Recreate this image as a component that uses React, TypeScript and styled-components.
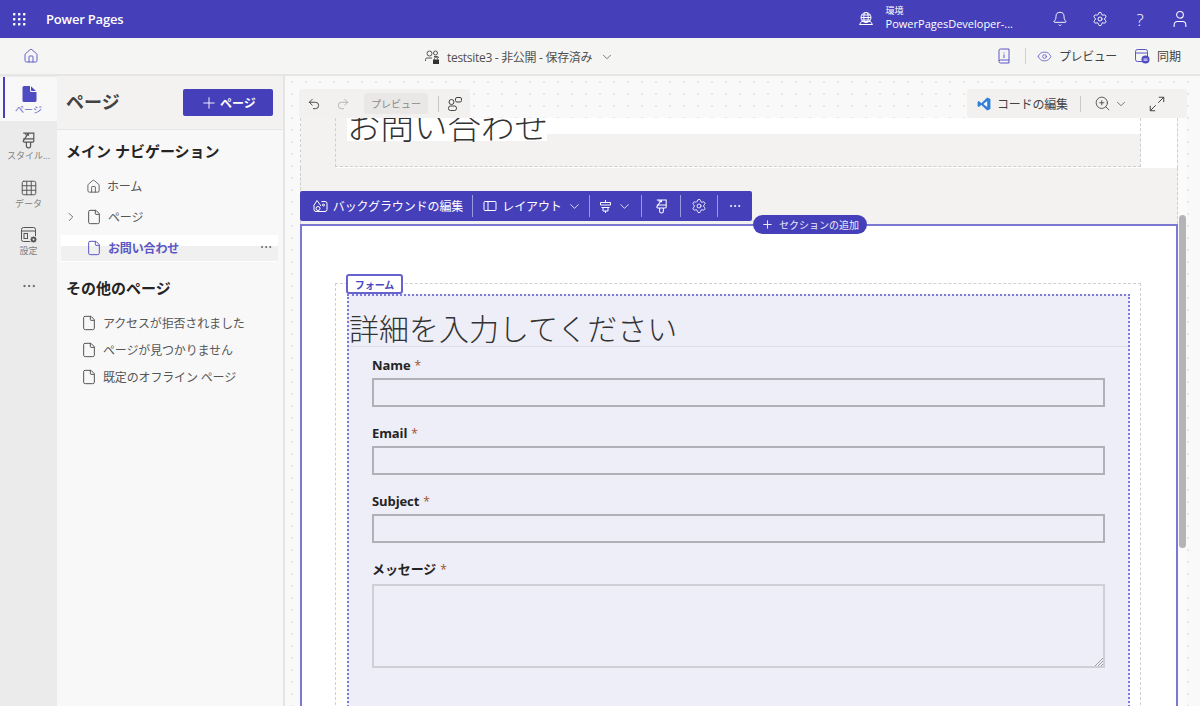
import React from 'react';
import styled, { createGlobalStyle } from 'styled-components';
import {
  Bell,
  ChevronDown,
  ChevronRight,
  Ellipsis,
  File,
  Grid3x3,
  Home,
  Maximize2,
  MoreHorizontal,
  Plus,
  Redo2,
  Settings,
  Undo2,
  User,
  ZoomIn,
  Eye,
} from 'lucide-react';

const accent = '#4540ba';
const uiFont = `"Open Sans", "Noto Sans CJK JP", sans-serif`;

const GlobalStyle = createGlobalStyle`
  html, body {
    margin: 0;
    height: 100%;
    overflow: hidden;
    background: #f9f9f9;
    font-family: ${uiFont};
  }
  * { box-sizing: border-box; }
`;

const Page = styled.div`
  width: 1200px;
  height: 706px;
  display: flex;
  flex-direction: column;
  overflow: hidden;
`;

const TopBar = styled.header`
  height: 38px;
  flex: none;
  background: ${accent};
  color: #fff;
  display: flex;
  align-items: center;
  padding-left: 12px;
`;

const Brand = styled.span`
  margin-left: 20px;
  font-size: 13px;
  font-weight: 600;
  letter-spacing: -0.2px;
`;

const EnvBlock = styled.div`
  margin-left: auto;
  display: flex;
  align-items: center;
  gap: 12px;
  margin-right: 39px;
`;

const EnvText = styled.div`
  display: flex;
  flex-direction: column;
  font-size: 11px;
  line-height: 14px;
  margin-top: -2px;
  small {
    font-size: 9px;
    line-height: 12px;
  }
`;

const TopIcons = styled.div`
  display: flex;
  align-items: center;
  gap: 24px;
  margin-right: 10px;
`;

const HelpMark = styled.span`
  width: 16px;
  font-size: 17px;
  line-height: 17px;
  font-weight: 300;
  text-align: center;
`;

const SubBar = styled.div`
  height: 38px;
  flex: none;
  background: #f5f5f4;
  border-bottom: 2px solid #e6e6e5;
  display: flex;
  align-items: center;
  position: relative;
  padding: 0 19px 0 23px;
  color: #424242;
  font-size: 12px;
`;

const SiteStatus = styled.div`
  position: absolute;
  left: 424px;
  top: 10px;
  display: flex;
  align-items: center;
  gap: 7px;
  color: #505050;
  letter-spacing: -0.3px;
`;

const SubActions = styled.div`
  margin-left: auto;
  display: flex;
  align-items: center;
  gap: 7px;
`;

const SubDivider = styled.span`
  width: 1px;
  height: 16px;
  background: #d0d0d0;
  margin: 0 4px 0 7px;
`;

const PreviewLabel = styled.span`
  margin-right: 10px;
  letter-spacing: -0.4px;
`;

const Body = styled.div`
  flex: 1;
  display: flex;
  min-height: 0;
`;

const Rail = styled.nav`
  width: 57px;
  flex: none;
  background: #ebebeb;
  display: flex;
  flex-direction: column;
  padding-top: 1px;
`;

const RailItem = styled.div<{ $active?: boolean; $more?: boolean }>`
  height: ${p => (p.$active ? '44px' : '47px')};
  padding-top: ${p => (p.$active ? '2px' : p.$more ? '0' : '4px')};
  flex: none;
  display: flex;
  flex-direction: column;
  align-items: center;
  justify-content: center;
  gap: 1px;
  font-size: 9px;
  line-height: 11px;
  color: ${p => (p.$active ? '#6a67c8' : '#808080')};
  background: ${p => (p.$active ? '#f8f8f8' : 'transparent')};
  position: relative;
  white-space: nowrap;
  svg {
    color: #555;
  }
  &::before {
    content: '';
    display: ${p => (p.$active ? 'block' : 'none')};
    position: absolute;
    left: 3px;
    top: 0;
    bottom: 3px;
    width: 2px;
    background: ${accent};
  }
`;

const SidePanel = styled.aside`
  width: 228px;
  flex: none;
  background: #f8f8f8;
  border-right: 2px solid #e4e4e4;
  display: flex;
  flex-direction: column;
`;

const PanelHead = styled.div`
  height: 54px;
  flex: none;
  background: #f3f2f1;
  border-bottom: 1px solid #e6e6e6;
  display: flex;
  align-items: center;
  justify-content: space-between;
  padding: 0 10px 0 9px;
`;

const PanelTitle = styled.h2`
  margin: -3px 0 0;
  font-size: 18px;
  font-weight: 700;
  color: #424242;
`;

const AddPage = styled.button`
  width: 90px;
  height: 27px;
  border: 0;
  border-radius: 2px;
  background: ${accent};
  color: #fff;
  display: flex;
  align-items: center;
  justify-content: center;
  gap: 2px;
  font: 700 12px ${uiFont};
`;

const GroupTitle = styled.h3<{ $top: number }>`
  margin: ${p => p.$top}px 0 0;
  font-size: 15px;
  line-height: 20px;
  font-weight: 700;
  color: #242424;
  padding-left: 9px;
`;

const NavList = styled.ul<{ $top: number; $gap: number; $indent: number }>`
  list-style: none;
  margin: ${p => p.$top}px 0 0;
  padding: 0 0 0 ${p => p.$indent}px;
  display: flex;
  flex-direction: column;
  gap: ${p => p.$gap}px;
`;

const NavRow = styled.li<{ $active?: boolean }>`
  height: ${p => (p.$active ? '26px' : '22px')};
  display: flex;
  align-items: center;
  gap: 6px;
  font-size: 12px;
  letter-spacing: -0.15px;
  color: ${p => (p.$active ? '#5a56c4' : '#555')};
  font-weight: ${p => (p.$active ? 700 : 400)};
  position: relative;
`;

const ActiveStrip = styled.ul`
  list-style: none;
  margin: 7px 5px 0 4px;
  padding: 0 0 0 25px;
  background: linear-gradient(#fff 0 11px, #f0f0f0 11px 100%);
  border-bottom: 1px solid #fff;
`;

const Caret = styled.span`
  position: absolute;
  left: -22px;
  display: flex;
`;

const RowMenu = styled.span`
  position: absolute;
  right: 5px;
  top: 5px;
  display: flex;
  color: #555;
`;

const Canvas = styled.main`
  flex: 1;
  position: relative;
  overflow: hidden;
  background-color: #f9f9f9;
  background-image: radial-gradient(#e7e7e7 1px, transparent 1.2px);
  background-size: 14px 12px;
  padding-top: 42px;
`;

const FloatBar = styled.div`
  position: absolute;
  top: 13px;
  height: 29px;
  background: #f2f1f0;
  border-radius: 3px;
  display: flex;
  align-items: center;
  color: #424242;
  font-size: 12px;
  z-index: 3;
`;

const LeftTools = styled(FloatBar)`
  left: 14px;
  width: 171px;
  padding-left: 8px;
`;

const RightTools = styled(FloatBar)`
  right: 13px;
  width: 220px;
  padding-left: 10px;
`;

const Nudge = styled.span<{ $l: number }>`
  display: flex;
  margin-left: ${p => p.$l}px;
`;

const PreviewChip = styled.span`
  background: #e9e8e6;
  color: #8a8a8a;
  border-radius: 3px;
  font-size: 10px;
  height: 21px;
  width: 64px;
  display: flex;
  align-items: center;
  justify-content: center;
  margin-left: 14px;
`;

const ToolDivider = styled.span<{ $l: number }>`
  width: 1px;
  height: 16px;
  background: #c8c8c8;
  margin-left: ${p => p.$l}px;
`;

const CodeLabel = styled.span`
  margin-left: 6px;
  letter-spacing: -0.2px;
  width: 83px;
`;

const Sheet = styled.div`
  width: 878px;
  margin-left: 15px;
  position: relative;
`;

const HeroSection = styled.section`
  height: 50px;
  background: linear-gradient(90deg, #f3f2f1 0 35px, #fff 35px 100%);
  border-left: 1px dashed #cfcfcf;
  border-right: 1px dashed #cfcfcf;
  padding: 0 36px 0 34px;
`;

const HeroBox = styled.div`
  height: 49px;
  background: linear-gradient(#fff, #fff) no-repeat 11px 0 / 100% 16px, #f3f2f1;
  border: 1px dashed #cfcfcf;
  border-top: 0;
  overflow: hidden;
`;

const HeroTitle = styled.div`
  font-size: 33.5px;
  line-height: 17px;
  margin-left: 11px;
  color: #333;
  font-weight: 300;
  background: #fff;
  width: 200px;
  height: 23px;
  white-space: nowrap;
`;

const GapSection = styled.div`
  height: 56px;
  background: #f3f2f1;
  border-left: 1px dashed #cfcfcf;
  border-right: 1px dashed #cfcfcf;
  position: relative;
`;

const SectionBar = styled.div`
  position: absolute;
  left: -1px;
  top: 23px;
  height: 30px;
  width: 452px;
  background: ${accent};
  border-radius: 2px;
  color: #fff;
  display: flex;
  align-items: center;
  font-size: 12px;
  letter-spacing: -0.1px;
  z-index: 2;
`;

const BarItem = styled.span<{ $w: number; $inset?: boolean }>`
  width: ${p => p.$w}px;
  padding-left: ${p => (p.$inset ? '3px' : '0')};
  height: 22px;
  flex: none;
  display: flex;
  align-items: center;
  justify-content: center;
  gap: 5px;
  border-right: 1px solid #9d9ae0;
  &:last-child {
    border-right: 0;
  }
`;

const AddSection = styled.span`
  position: absolute;
  left: 452px;
  top: 47px;
  width: 114px;
  height: 19px;
  border-radius: 10px;
  background: ${accent};
  color: #ececf8;
  font-size: 10px;
  display: flex;
  align-items: center;
  justify-content: center;
  gap: 5px;
  z-index: 2;
`;

const WhiteSection = styled.section`
  background: #fff;
  border: 2px solid #7b78d4;
  border-bottom: 0;
  height: 490px;
  padding: 57px 35px 0 33px;
`;

const FormFrame = styled.div`
  border: 1px dashed #cfcfcf;
  height: 432px;
  padding: 10px 10px 0 11px;
  position: relative;
`;

const FormTag = styled.span`
  position: absolute;
  left: 10px;
  top: -10px;
  width: 57px;
  height: 20px;
  border: 2px solid #6663cc;
  border-radius: 3px;
  background: #fff;
  color: #4a46bd;
  font-size: 10px;
  font-weight: 600;
  display: flex;
  align-items: center;
  justify-content: center;
  z-index: 1;
`;

const FormBody = styled.div`
  height: 420px;
  background: #eeeef8;
  border: 2px dotted #7e7bd6;
  border-bottom: 0;
`;

const FormHeading = styled.h1`
  margin: 14px 0 0;
  font-size: 30px;
  line-height: 38px;
  height: 37px;
  font-weight: 300;
  color: #333;
  border-bottom: 1px solid #dedee8;
`;

const Fields = styled.div`
  padding: 9px 23px 0 23px;
  display: flex;
  flex-direction: column;
`;

const FieldLabel = styled.label`
  display: block;
  height: 18px;
  font-size: 13px;
  line-height: 18px;
  font-weight: 700;
  color: #242424;
  margin-bottom: 4px;
  letter-spacing: -0.1px;
`;

const Required = styled.i`
  font-style: normal;
  font-weight: 400;
  font-size: 12px;
  color: #a0522d;
  margin-left: 4px;
`;

const TextBox = styled.div`
  height: 29px;
  border: 2px solid #b0b0b8;
  margin-bottom: 17px;
`;

const TextArea = styled.div`
  height: 84px;
  border: 2px solid #cfcfd8;
  margin-top: 2px;
  position: relative;
`;

const Grip = styled.svg`
  position: absolute;
  right: 0;
  bottom: 0;
`;

const ScrollTrack = styled.div`
  position: absolute;
  left: 893px;
  top: 42px;
  bottom: 0;
  width: 9px;
  background: #fbfbfb;
  z-index: 1;
`;

const ScrollThumb = styled.div`
  position: absolute;
  left: 1px;
  top: 97px;
  width: 7px;
  height: 333px;
  border-radius: 4px;
  background: #b4b4b8;
`;

const Waffle = () => (
  <svg width="14" height="14" viewBox="0 0 14 14" fill="#fff">
    {[1, 6, 11].flatMap(y =>
      [1, 6, 11].map(x => <rect key={`${x}-${y}`} x={x} y={y} width="2.4" height="2.4" rx="0.6" />),
    )}
  </svg>
);

const GlobeBase = () => (
  <svg width="16" height="16" viewBox="0 0 16 16" fill="none" stroke="#fff" strokeWidth="1">
    <circle cx="8" cy="6.5" r="5" />
    <ellipse cx="8" cy="6.5" rx="2.2" ry="5" />
    <path d="M3 6.5h10M3.6 4h8.8M3.6 9h8.8M1.5 13.5h13l-2-3h-9z" />
  </svg>
);

const PageSolid = () => (
  <svg width="16" height="18" viewBox="0 0 16 18">
    <path d="M1.500 2.500A1.500 1.500 0 0 1 3 1h6v4.500A1.500 1.500 0 0 0 10.500 7h5v8.500a1.500 1.500 0 0 1-1.500 1.500H3a1.500 1.500 0 0 1-1.500-1.500z" fill="#4f4bc0" />
    <path d="M10 1.300 15 6h-4.200a.8.8 0 0 1-.8-.8z" fill="#4f4bc0" />
  </svg>
);

const BrushIcon = ({ size, color }: { size: number; color: string }) => (
  <svg width={size} height={size} viewBox="0 0 16 16" fill="none" stroke={color} strokeWidth="1.1">
    <path d="M3 1h2.500v2M5.500 1H8v2.500M8 1h5v7.500a1 1 0 0 1-1 1H4a1 1 0 0 1-1-1z" />
    <path d="M3 6.500h10M6 9.500V13a2 2 0 0 0 4 0V9.500" />
  </svg>
);

const SiteLock = () => (
  <svg width="16" height="16" viewBox="0 0 16 16" fill="none" stroke="#555" strokeWidth="1">
    <circle cx="5.500" cy="4.500" r="2.500" />
    <circle cx="11.500" cy="4" r="2" />
    <path d="M1.500 12V10.500a1.500 1.500 0 0 1 1.500-1.500h5M10 7.500h3a1.500 1.500 0 0 1 1.500 1.500" />
    <rect x="9" y="10.500" width="6" height="4.500" fill="#333" stroke="none" />
    <path d="M10.500 10.500V9.500a1.500 1.500 0 0 1 3 0v1" />
  </svg>
);

const InfoBook = () => (
  <svg width="14" height="16" viewBox="0 0 14 16" fill="none" stroke="#5a56c4" strokeWidth="1">
    <path d="M2 13V2.500A1.500 1.500 0 0 1 3.500 1h8.500v11H3.500a1.500 1.500 0 0 0 0 3h8.500v-3" />
    <path d="M7 4.500v.8M7 6.500v3.500" />
  </svg>
);

const SyncIcon = () => (
  <svg width="16" height="16" viewBox="0 0 16 16" fill="none">
    <rect x="1.500" y="1.500" width="12" height="12" rx="2" stroke="#5a56c4" />
    <path d="M1.500 5h12" stroke="#5a56c4" />
    <circle cx="11.500" cy="11.500" r="4" fill="#4f4bc0" />
    <path d="M9.500 11h4M9.500 12.300h4" stroke="#fff" strokeWidth="0.8" />
  </svg>
);

const VsCode = () => (
  <svg width="14" height="14" viewBox="0 0 24 24">
    <path d="M17.500 1 23 3.500v17L17.500 23 7.500 13.500 3 17l-2-1V8l2-1 4.500 3.500z" fill="#2f80d8" />
    <path d="M17.500 7 11 12l6.500 5z" fill="#fff" />
  </svg>
);

const ComponentIcon = () => (
  <svg width="16" height="16" viewBox="0 0 16 16" fill="none" stroke="#424242" strokeWidth="1">
    <rect x="8.500" y="1.500" width="6" height="4.500" rx="1.500" />
    <circle cx="4.500" cy="6" r="2.500" />
    <rect x="1.500" y="10" width="8" height="4.500" rx="2" />
  </svg>
);

const BackgroundIcon = () => (
  <svg width="16" height="16" viewBox="0 0 16 16" fill="none" stroke="#fff" strokeWidth="1">
    <path d="M9.500 3.500H13a2 2 0 0 1 2 2v6a2 2 0 0 1-2 2H4a2 2 0 0 1-2-2V8" />
    <path d="M1.500 8 5 2.500 9 8" />
    <circle cx="6" cy="10.500" r="2" />
    <circle cx="11.500" cy="7" r="1" />
  </svg>
);

const LayoutIcon = () => (
  <svg width="14" height="14" viewBox="0 0 14 14" fill="none" stroke="#fff" strokeWidth="1">
    <rect x="1" y="2.500" width="12" height="9" rx="1" />
    <path d="M5 2.500v9" />
  </svg>
);

const SpacingIcon = () => (
  <svg width="13" height="15" viewBox="0 0 13 15" fill="none" stroke="#fff" strokeWidth="1">
    <path d="M6.500 1v2M1.500 3.500h10v2.500h-10zM2.500 8.500h8M4 8.500v3.500h5V8.500M6.500 12v2" />
  </svg>
);

const SettingsCard = () => (
  <svg width="18" height="18" viewBox="0 0 18 18" fill="none" stroke="#555" strokeWidth="1">
    <rect x="1.500" y="1.500" width="14" height="14" rx="2" />
    <path d="M1.500 5h14" />
    <rect x="4" y="7.500" width="3.500" height="5" />
    <circle cx="13.500" cy="13.500" r="3.500" fill="#555" stroke="#ebebeb" />
    <circle cx="13.500" cy="13.500" r="1" fill="#ebebeb" stroke="none" />
  </svg>
);

const PageIcon = () => <File size={16} strokeWidth={1.5} />;

export default function App() {
  return (
    <>
      <GlobalStyle />
      <Page>
        <TopBar>
          <Waffle />
          <Brand>Power Pages</Brand>
          <EnvBlock>
            <GlobeBase />
            <EnvText>
              <small>環境</small>
              PowerPagesDeveloper-...
            </EnvText>
          </EnvBlock>
          <TopIcons>
            <Bell size={16} strokeWidth={1.4} />
            <Settings size={16} strokeWidth={1.4} />
            <HelpMark>?</HelpMark>
            <Nudge $l={-2}>
              <User size={20} strokeWidth={1.3} />
            </Nudge>
          </TopIcons>
        </TopBar>

        <SubBar>
          <Home size={16} strokeWidth={1.4} color="#5a56c4" />
          <SiteStatus>
            <SiteLock />
            testsite3 - 非公開 - 保存済み
            <Nudge $l={1}>
              <ChevronDown size={14} strokeWidth={1.3} />
            </Nudge>
          </SiteStatus>
          <SubActions>
            <InfoBook />
            <SubDivider />
            <Eye size={15} strokeWidth={1.3} color="#5a56c4" />
            <PreviewLabel>プレビュー</PreviewLabel>
            <SyncIcon />
            同期
          </SubActions>
        </SubBar>

        <Body>
          <Rail>
            <RailItem $active>
              <PageSolid />
              ページ
            </RailItem>
            <RailItem>
              <BrushIcon size={17} color="#555" />
              スタイル...
            </RailItem>
            <RailItem>
              <Grid3x3 size={18} strokeWidth={1.3} />
              データ
            </RailItem>
            <RailItem>
              <SettingsCard />
              設定
            </RailItem>
            <RailItem $more>
              <Ellipsis size={16} strokeWidth={1.4} />
            </RailItem>
          </Rail>

          <SidePanel>
            <PanelHead>
              <PanelTitle>ページ</PanelTitle>
              <AddPage>
                <Plus size={18} strokeWidth={1.2} />
                ページ
              </AddPage>
            </PanelHead>
            <GroupTitle $top={11}>メイン ナビゲーション</GroupTitle>
            <NavList $top={14} $gap={9} $indent={29}>
              <NavRow>
                <Home size={15} strokeWidth={1.4} />
                ホーム
              </NavRow>
              <NavRow>
                <Caret>
                  <ChevronRight size={14} strokeWidth={1.4} />
                </Caret>
                <PageIcon />
                ページ
              </NavRow>
            </NavList>
            <ActiveStrip>
              <NavRow $active>
                <PageIcon />
                お問い合わせ
                <RowMenu>
                  <MoreHorizontal size={14} strokeWidth={1.3} />
                </RowMenu>
              </NavRow>
            </ActiveStrip>
            <GroupTitle $top={16}>その他のページ</GroupTitle>
            <NavList $top={14} $gap={5} $indent={24}>
              <NavRow>
                <PageIcon />
                アクセスが拒否されました
              </NavRow>
              <NavRow>
                <PageIcon />
                ページが見つかりません
              </NavRow>
              <NavRow>
                <PageIcon />
                既定のオフライン ページ
              </NavRow>
            </NavList>
          </SidePanel>

          <Canvas>
            <LeftTools>
              <Undo2 size={14} strokeWidth={1.6} />
              <Nudge $l={15}>
                <Redo2 size={14} strokeWidth={1.4} color="#a8a8a8" />
              </Nudge>
              <PreviewChip>プレビュー</PreviewChip>
              <ToolDivider $l={10} />
              <Nudge $l={8}>
                <ComponentIcon />
              </Nudge>
            </LeftTools>
            <RightTools>
              <VsCode />
              <CodeLabel>コードの編集</CodeLabel>
              <ToolDivider $l={0} />
              <Nudge $l={13}>
                <ZoomIn size={17} strokeWidth={1.2} />
              </Nudge>
              <Nudge $l={3}>
                <ChevronDown size={14} strokeWidth={1.2} />
              </Nudge>
              <Nudge $l={20}>
                <Maximize2 size={18} strokeWidth={1.3} />
              </Nudge>
            </RightTools>

            <Sheet>
              <HeroSection>
                <HeroBox>
                  <HeroTitle>お問い合わせ</HeroTitle>
                </HeroBox>
              </HeroSection>
              <GapSection>
                <SectionBar>
                  <BarItem $w={173} $inset>
                    <BackgroundIcon />
                    バックグラウンドの編集
                  </BarItem>
                  <BarItem $w={117} $inset>
                    <LayoutIcon />
                    レイアウト
                    <ChevronDown size={15} strokeWidth={1.3} />
                  </BarItem>
                  <BarItem $w={52}>
                    <SpacingIcon />
                    <ChevronDown size={15} strokeWidth={1.3} />
                  </BarItem>
                  <BarItem $w={39}>
                    <BrushIcon size={15} color="#fff" />
                  </BarItem>
                  <BarItem $w={37}>
                    <Settings size={16} strokeWidth={1.3} />
                  </BarItem>
                  <BarItem $w={34}>
                    <MoreHorizontal size={14} strokeWidth={1.6} />
                  </BarItem>
                </SectionBar>
                <AddSection>
                  <Plus size={13} strokeWidth={1.8} />
                  セクションの追加
                </AddSection>
              </GapSection>
              <WhiteSection>
                <FormFrame>
                  <FormTag>フォーム</FormTag>
                  <FormBody>
                    <FormHeading>詳細を入力してください</FormHeading>
                    <Fields>
                      <FieldLabel>
                        Name
                        <Required>*</Required>
                      </FieldLabel>
                      <TextBox />
                      <FieldLabel>
                        Email
                        <Required>*</Required>
                      </FieldLabel>
                      <TextBox />
                      <FieldLabel>
                        Subject
                        <Required>*</Required>
                      </FieldLabel>
                      <TextBox />
                      <FieldLabel>
                        メッセージ
                        <Required>*</Required>
                      </FieldLabel>
                      <TextArea>
                        <Grip width="9" height="9" viewBox="0 0 9 9" stroke="#888" strokeWidth="0.8">
                          <path d="M1 9 9 1M4 9 9 4M7 9 9 7" />
                        </Grip>
                      </TextArea>
                    </Fields>
                  </FormBody>
                </FormFrame>
              </WhiteSection>
            </Sheet>
            <ScrollTrack>
              <ScrollThumb />
            </ScrollTrack>
          </Canvas>
        </Body>
      </Page>
    </>
  );
}
